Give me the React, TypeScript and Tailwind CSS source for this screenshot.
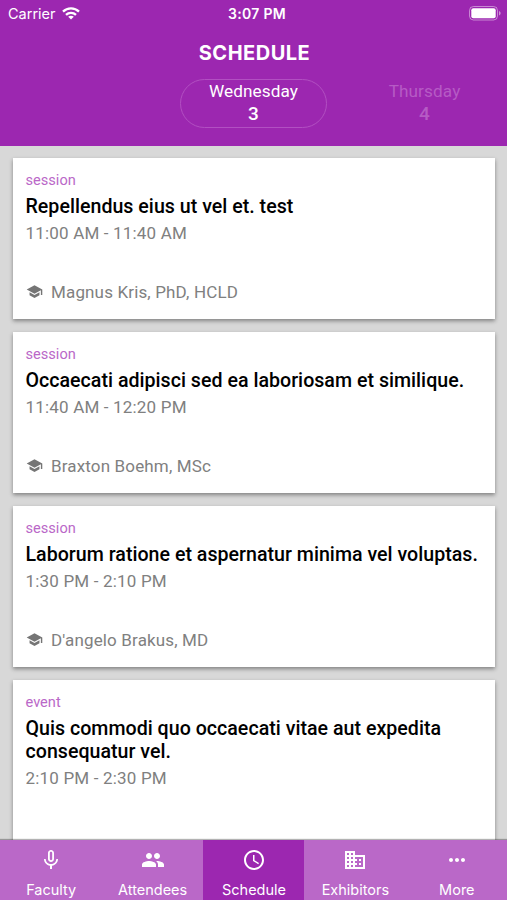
import React, { useState } from "react";
import {
  MdAccessTime,
  MdBusiness,
  MdMicNone,
  MdMoreHoriz,
  MdPeople,
  MdSchool,
} from "react-icons/md";

const days = [
  { name: "Wednesday", date: 3 },
  { name: "Thursday", date: 4 },
];

const events = [
  {
    id: 1,
    type: "session",
    title: "Repellendus eius ut vel et. test",
    time: "11:00 AM - 11:40 AM",
    speaker: "Magnus Kris, PhD, HCLD",
  },
  {
    id: 2,
    type: "session",
    title: "Occaecati adipisci sed ea laboriosam et similique.",
    time: "11:40 AM - 12:20 PM",
    speaker: "Braxton Boehm, MSc",
  },
  {
    id: 3,
    type: "session",
    title: "Laborum ratione et aspernatur minima vel voluptas.",
    time: "1:30 PM - 2:10 PM",
    speaker: "D'angelo Brakus, MD",
  },
  {
    id: 4,
    type: "event",
    title: "Quis commodi quo occaecati vitae aut expedita consequatur vel.",
    time: "2:10 PM - 2:30 PM",
  },
];

const tabs = [
  { label: "Faculty", icon: MdMicNone },
  { label: "Attendees", icon: MdPeople },
  { label: "Schedule", icon: MdAccessTime },
  { label: "Exhibitors", icon: MdBusiness },
  { label: "More", icon: MdMoreHoriz },
];

const StatusBar: React.FC = () => (
  <div className="grid h-[27px] grid-cols-3 items-center pr-[7px] pl-2 font-['Inter',sans-serif] text-[14px] text-white">
    <div className="flex items-center gap-[6px]">
      <span className="text-[14.5px]">Carrier</span>
      <svg width="18" height="13" viewBox="0 0 18 13" fill="none" stroke="white" strokeWidth="2.3">
        <path d="M1 4.6C5.4 0.3 12.6 0.3 17 4.6" />
        <path d="M4 7.8C6.8 5.1 11.2 5.1 14 7.8" />
        <path d="M6.2 9.7C7.8 8.3 10.2 8.3 11.8 9.7L9 12.5Z" fill="white" stroke="none" />
      </svg>
    </div>
    <span className="pl-1.5 text-center font-semibold tracking-[0.3px]">3:07 PM</span>
    <svg className="-mr-px justify-self-end" width="32" height="15" viewBox="0 0 32 15">
      <rect x="0.5" y="0.5" width="28" height="13.5" rx="4" fill="none" stroke="white" strokeOpacity="0.45" />
      <rect x="2.3" y="2.3" width="24.4" height="9.9" rx="2" fill="white" />
      <path d="M30 5V9.5C31.2 9 31.6 8.2 31.6 7.2S31.2 5.5 30 5Z" fill="white" fillOpacity="0.5" />
    </svg>
  </div>
);

const App: React.FC = () => {
  const [activeDay, setActiveDay] = useState(0);
  const [activeTab, setActiveTab] = useState("Schedule");

  return (
    <div className="flex h-[900px] w-[507px] flex-col overflow-hidden bg-[#d8d8d8] font-['Roboto',sans-serif]">
      <header className="h-[146px] shrink-0 bg-[#9c27b0] text-white">
        <StatusBar />
        <h1 className="mt-3 pl-0.5 text-center font-['Inter',sans-serif] text-[20px] leading-7 font-bold tracking-[0.5px]">
          SCHEDULE
        </h1>

        {/* Day picker */}
        <div className="mt-3 flex gap-6 pl-[180px]">
          {days.map((day, index) => (
            <button
              key={day.name}
              onClick={() => setActiveDay(index)}
              className={`flex h-[49px] w-[147px] shrink-0 flex-col items-center rounded-full border text-[17.2px] leading-[22px] tracking-[0.1px] ${
                activeDay === index
                  ? "border-[#b24fc2] text-white"
                  : "border-transparent text-[#b65bc5]"
              }`}
            >
              <span>{day.name}</span>
              <span className="mt-px text-[19px] font-medium">{day.date}</span>
            </button>
          ))}
        </div>
      </header>

      {/* Event list */}
      <main className="flex min-h-0 flex-1 flex-col gap-[13px] overflow-hidden px-[13px] pt-3 pr-3">
        {events.map((event) => (
          <article
            key={event.id}
            className="flex min-h-[161px] shrink-0 flex-col bg-white px-[12.5px] pt-3 pb-[13px] shadow-[0_2px_4px_rgba(0,0,0,0.4)]"
          >
            <span className="text-[14.6px] leading-5 text-[#ba68c8]">
              {event.type}
            </span>
            <h2 className="mt-[4.5px] text-[19.6px] leading-[23px] font-medium tracking-[0.02px] text-black">
              {event.title}
            </h2>
            <p className="mt-1 text-[17px] leading-[22px] tracking-[0.18px] text-[#808080]">
              {event.time}
            </p>
            <div className="mt-auto flex h-[26px] items-center gap-[8.5px] text-[17px] tracking-[0.15px] text-[#808080]">
              {event.speaker && (
                <>
                  <MdSchool className="mb-[3px] size-[17px] text-[#757575]" />
                  <span>{event.speaker}</span>
                </>
              )}
            </div>
          </article>
        ))}
      </main>

      <nav className="z-10 flex h-[60px] shrink-0 bg-[#ba68c8] font-['Inter',sans-serif] text-white shadow-[0_-1px_1px_rgba(0,0,0,0.3)]">
        {tabs.map(({ label, icon: Icon }) => (
          <button
            key={label}
            onClick={() => setActiveTab(label)}
            className={`flex flex-1 flex-col items-center pt-2 pl-px ${
              activeTab === label ? "bg-[#9c27b0]" : ""
            }`}
          >
            <Icon className="size-6" />
            <span className="mt-2 text-[14.5px] leading-5">{label}</span>
          </button>
        ))}
      </nav>
    </div>
  );
};

export default App;
